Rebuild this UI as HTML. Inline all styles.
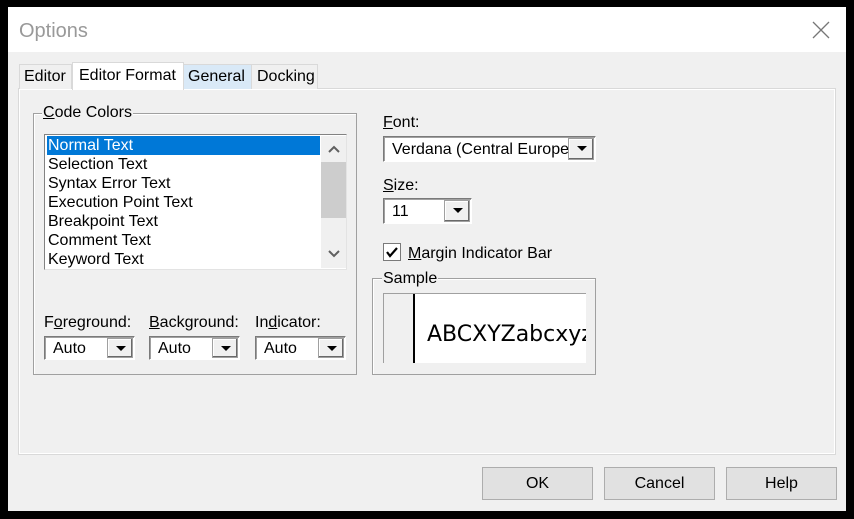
<!DOCTYPE html>
<html><head><meta charset="utf-8"><style>
*{box-sizing:border-box}
body{margin:0;width:854px;height:519px;background:#000;position:relative;overflow:hidden;font-family:"Liberation Sans","DejaVu Sans",sans-serif;font-size:16px;color:#000}
.a{position:absolute}
.win{left:8px;top:7px;width:838px;height:504px;background:#f0f0f0}
.title{left:8px;top:7px;width:838px;height:45px;background:#fff}
.tab{top:64px;height:25px;border:1px solid #d9d9d9;border-bottom:none;background:#f0f0f0;padding:3px 0 0 5px}
.panel{left:18px;top:88px;width:818px;height:367px;border:1px solid #d9d9d9;background:#f0f0f0;box-shadow:inset 1px 1px 0 #fff,inset -1px -1px 0 #fff}
.grp{border:1px solid #a0a0a0;box-shadow:1px 1px 0 #fff inset}
.lbl{background:#f0f0f0;padding:0 1px;line-height:16px}
.combo{height:24px;border:1px solid #7a7a7a;border-right-color:#fff;border-bottom-color:#fff;background:#fff;box-shadow:inset 1px 1px 0 #a0a0a0}
.combo span{position:absolute;left:8px;top:3px;white-space:nowrap}
.arr{position:absolute;right:1px;top:1px;width:26px;height:20px;background:#f0f0f0;border:1px solid #a0a0a0;box-shadow:inset -1px -1px 0 #696969,inset 1px 1px 0 #fff}
.arr:after{content:"";position:absolute;left:8px;top:7px;border-left:5px solid transparent;border-right:5px solid transparent;border-top:5px solid #000}
.btn{top:467px;width:111px;height:33px;background:#e1e1e1;border:1px solid #adadad;text-align:center;line-height:31px;font-size:16px}
.row{position:absolute;left:2px;height:19px;line-height:20px;width:273px;padding-left:1px}
u{text-decoration:underline}
</style></head><body>
<div class="a win"></div>
<div class="a title"></div>
<div class="a" style="left:19px;top:20px;font-size:20px;color:#999">Options</div>
<svg class="a" style="left:812px;top:21px" width="18" height="18"><path d="M1 1L17 17M17 1L1 17" stroke="#777" stroke-width="1.3"/></svg>

<div class="a panel"></div>
<div class="a tab" style="left:19px;width:53px;padding-left:4px">Editor</div>
<div class="a tab" style="left:183px;width:69px;background:#d9e9f7;padding-left:4px">General</div>
<div class="a tab" style="left:251px;width:67px;padding-left:5px">Docking</div>
<div class="a tab" style="left:72px;top:62px;height:28px;width:112px;background:#fff;padding-top:4px;padding-left:6px;font-size:16px">Editor Format</div>

<div class="a grp" style="left:33px;top:113px;width:324px;height:262px"></div>
<div class="a lbl" style="left:42px;top:105px"><u>C</u>ode Colors</div>
<div class="a" style="left:44px;top:134px;width:303px;height:136px;background:#fff;border:1px solid #828282;border-right-color:#e3e3e3;border-bottom-color:#e3e3e3">
 <div class="row" style="top:1px;background:#0078d7;color:#fff">Normal Text</div>
 <div class="row" style="top:20px">Selection Text</div>
 <div class="row" style="top:39px">Syntax Error Text</div>
 <div class="row" style="top:58px">Execution Point Text</div>
 <div class="row" style="top:77px">Breakpoint Text</div>
 <div class="row" style="top:96px">Comment Text</div>
 <div class="row" style="top:115px">Keyword Text</div>
 <div class="a" style="left:276px;top:1px;width:25px;height:132px;background:#f0f0f0"></div>
 <div class="a" style="left:276px;top:27px;width:25px;height:56px;background:#cdcdcd"></div>
 <svg class="a" style="left:283px;top:10px" width="12" height="8"><path d="M1 7L6 2L11 7" stroke="#606060" stroke-width="2" fill="none"/></svg>
 <svg class="a" style="left:283px;top:115px" width="12" height="8"><path d="M1 1L6 6L11 1" stroke="#606060" stroke-width="2" fill="none"/></svg>
</div>

<div class="a" style="left:44px;top:314px">F<u>o</u>reground:</div>
<div class="a" style="left:149px;top:314px"><u>B</u>ackground:</div>
<div class="a" style="left:255px;top:314px">In<u>d</u>icator:</div>
<div class="a combo" style="left:44px;top:336px;width:91px"><span>Auto</span><div class="arr"></div></div>
<div class="a combo" style="left:149px;top:336px;width:91px"><span>Auto</span><div class="arr"></div></div>
<div class="a combo" style="left:255px;top:336px;width:91px"><span>Auto</span><div class="arr"></div></div>

<div class="a" style="left:383px;top:114px"><u>F</u>ont:</div>
<div class="a combo" style="left:383px;top:136px;width:213px;height:26px;overflow:hidden"><span style="top:4px">Verdana (Central Europea</span><div class="arr" style="height:22px;background:#f0f0f0"></div></div>
<div class="a" style="left:383px;top:177px"><u>S</u>ize:</div>
<div class="a combo" style="left:383px;top:198px;width:89px;height:26px"><span style="top:4px">11</span><div class="arr" style="height:22px"></div></div>

<div class="a" style="left:383px;top:243px;width:18px;height:18px;background:#fff;border:1px solid #7a7a7a"></div>
<svg class="a" style="left:385px;top:246px" width="14" height="12"><path d="M2 6L5 10L12 2" stroke="#000" stroke-width="2.2" fill="none"/></svg>
<div class="a" style="left:408px;top:245px"><u>M</u>argin Indicator Bar</div>

<div class="a grp" style="left:372px;top:278px;width:224px;height:97px"></div>
<div class="a lbl" style="left:382px;top:271px">Sample</div>
<div class="a" style="left:383px;top:293px;width:203px;height:70px;background:#fff;overflow:hidden;border-left:1px solid #a0a0a0;border-top:1px solid #a0a0a0">
 <div class="a" style="left:0;top:0;width:31px;height:70px;background:#f0f0f0;border-right:2px solid #000"></div>
 <div class="a" style="left:43px;top:28px;font-size:22px;font-family:'DejaVu Sans',sans-serif;white-space:nowrap">ABCXYZabcxyz</div>
</div>

<div class="a btn" style="left:482px">OK</div>
<div class="a btn" style="left:604px">Cancel</div>
<div class="a btn" style="left:726px">Help</div>
</body></html>
